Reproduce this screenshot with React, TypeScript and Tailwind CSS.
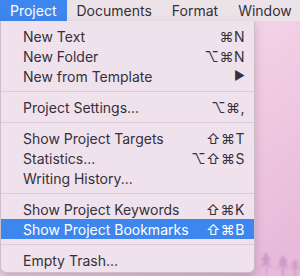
import React from 'react';

type Row =
  | { kind: 'item'; label: string; keys?: string; active?: boolean }
  | { kind: 'sep' };

const rows: Row[] = [
  { kind: 'item', label: 'New Text', keys: '⌘N' },
  { kind: 'item', label: 'New Folder', keys: '⌥⌘N' },
  { kind: 'item', label: 'New from Template', keys: '▶' },
  { kind: 'sep' },
  { kind: 'item', label: 'Project Settings...', keys: '⌥⌘,' },
  { kind: 'sep' },
  { kind: 'item', label: 'Show Project Targets', keys: '⇧⌘T' },
  { kind: 'item', label: 'Statistics...', keys: '⌥⇧⌘S' },
  { kind: 'item', label: 'Writing History...' },
  { kind: 'sep' },
  { kind: 'item', label: 'Show Project Keywords', keys: '⇧⌘K' },
  { kind: 'item', label: 'Show Project Bookmarks', keys: '⇧⌘B', active: true },
  { kind: 'sep' },
  { kind: 'item', label: 'Empty Trash...' },
];

const menus = ['Project', 'Documents', 'Format', 'Window'];

function Trees() {
  // blurry tree silhouettes in the wallpaper corner
  return (
    <svg className="absolute right-0 bottom-0 blur-[1px]" width="48" height="34" viewBox="0 0 48 34">
      <path d="M14 34 L14 22 L8 26 L13 18 L9 19 L14 10 L19 19 L15 18 L20 26 L15 22 L15 34 Z" fill="#c48fc3" opacity="0.8" />
      <path d="M30 34 L30 24 L25 27 L29 20 L26 21 L31 13 L36 21 L33 20 L37 27 L32 24 L32 34 Z" fill="#c48fc3" opacity="0.75" />
      <path d="M42 34 L42 26 L38 28 L41 22 L39 23 L43 17 L47 23 L45 22 L48 28 L44 26 L44 34 Z" fill="#c48fc3" opacity="0.65" />
    </svg>
  );
}

export default function App() {
  return (
    <div
      className="relative w-[300px] h-[276px] overflow-hidden bg-gradient-to-br from-[#efd9e7] via-[#f3d1e6] to-[#e6b6d8] text-[#35303a]"
      style={{ fontFamily: 'Inter, "DejaVu Sans", sans-serif' }}
    >
      <Trees />

      {/* Menu bar */}
      <div className="flex h-[21px] items-center bg-[#ece3e9] text-[14px] leading-none">
        {menus.map((m, i) => (
          <div
            key={m}
            className={
              i === 0
                ? 'flex h-full items-center bg-[#3d86ee] px-[10px] text-white'
                : 'flex h-full items-center px-[10px] text-[#35303a]'
            }
          >
            {m}
          </div>
        ))}
      </div>

      {/* Dropdown */}
      <div className="absolute left-0 top-[21px] w-[255px] rounded-b-[6px] border border-t-0 border-[#cdbcc9] bg-[#efe2ec] pt-[5px] pb-[2px] shadow-[0_4px_10px_rgba(80,40,70,0.25)] text-[14px]">
        {rows.map((r, i) =>
          r.kind === 'sep' ? (
            <div key={i} className="flex h-[11px] items-center">
              <div className="h-[1.5px] w-full bg-[#dacbd6]" />
            </div>
          ) : (
            <div
              key={i}
              className={
                r.active
                  ? 'flex h-[20px] items-center justify-between bg-[#3d86ee] pl-[22px] pr-[9px] text-white'
                  : 'flex h-[20px] items-center justify-between pl-[22px] pr-[9px]'
              }
            >
              <span>{r.label}</span>
              {r.keys && (
                <span className={r.keys === '▶' ? 'text-[12px]' : 'tracking-[0.5px]'}>
                  {r.keys}
                </span>
              )}
            </div>
          )
        )}
      </div>
    </div>
  );
}
